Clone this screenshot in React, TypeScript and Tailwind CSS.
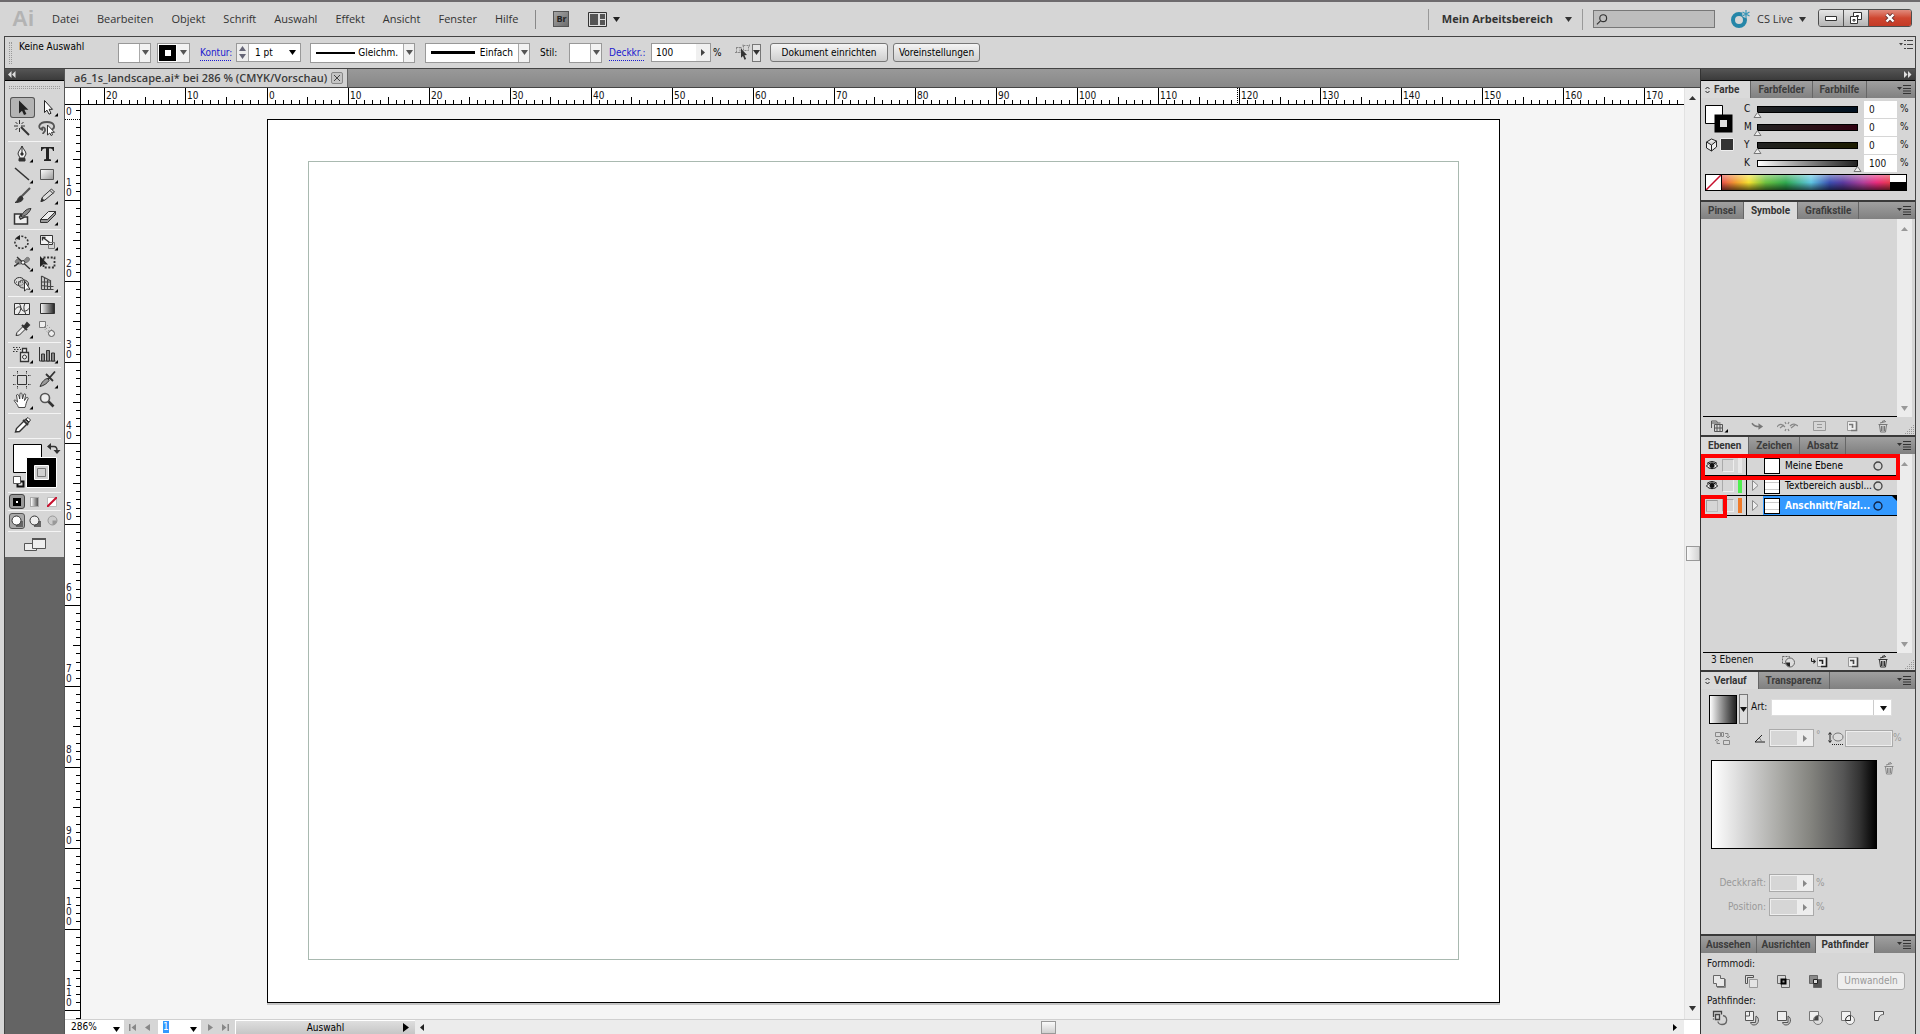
import { ReactNode } from 'react';

const UI = "font-['DejaVu_Sans_Condensed','DejaVu_Sans',sans-serif]";
const MM = 8.105;

const menus = ['Datei', 'Bearbeiten', 'Objekt', 'Schrift', 'Auswahl', 'Effekt', 'Ansicht', 'Fenster', 'Hilfe'];

const Down = ({ className = '' }: { className?: string }) => (
  <svg className={`shrink-0 ${className}`} width="7" height="5" viewBox="0 0 7 5" aria-hidden="true">
    <path d="M0 0h7L3.5 5z" fill="currentColor" />
  </svg>
);

const Right = ({ className = '' }: { className?: string }) => (
  <svg className={`shrink-0 ${className}`} width="5" height="7" viewBox="0 0 5 7" aria-hidden="true">
    <path d="M0 0v7l4-3.5z" fill="currentColor" />
  </svg>
);

/* ---------- menu bar ---------- */

const MenuBar = () => (
  <header className="flex h-9 shrink-0 items-center border-t-2 border-[#6e6b6e] bg-[#d6d6d6] pr-2 pl-3 font-['Open_Sans',sans-serif] text-[11px] text-[#333]">
    <span className="w-[40px] font-['Liberation_Sans',sans-serif] text-[22px] leading-5 font-bold text-[#b3b3b3]">Ai</span>
    <nav className="flex gap-[18px]">
      {menus.map((m) => (
        <button key={m} type="button">{m}</button>
      ))}
    </nav>
    <span className="ml-[17px] h-[19px] w-px bg-[#888]" />
    <button type="button" className="ml-[17px] h-4 w-4 border border-[#555] bg-linear-to-br from-[#a5a5a5] to-[#6d6d6d] text-[9px] leading-3 font-bold text-[#222]">Br</button>
    <button type="button" aria-label="Dokumente anordnen" className="ml-[19px] flex items-center gap-1.5">
      <svg width="19" height="15" viewBox="0 0 19 15">
        <path d="M.5.5h18v14H.5z" fill="#ddd" stroke="#333" />
        <path d="M2 2h8v11H2zM12 2h5v5h-5zM12 8h5v5h-5z" fill="#555" />
      </svg>
      <Down className="text-[#222]" />
    </button>
    <div className="flex-1" />
    <span className="h-[21px] w-px bg-[#999]" />
    <button type="button" className="ml-[13px] flex items-center gap-3 font-bold">
      Mein Arbeitsbereich <Down />
    </button>
    <span className="ml-[10px] h-[21px] w-px bg-[#999]" />
    <label className="ml-[10px] flex h-[18px] w-[122px] items-center border border-[#777] bg-[#bdbdbd] px-0.5">
      <svg width="13" height="13" viewBox="0 0 13 13" fill="none" stroke="#333" strokeWidth="1.3">
        <circle cx="8" cy="5" r="3.8" />
        <path d="M5 8l-4 4" />
      </svg>
      <input type="search" aria-label="Suchen" className="w-full bg-transparent text-[11px] outline-none" />
    </label>
    <button type="button" className="ml-[15px] flex items-center">
      <svg width="20" height="18" viewBox="0 0 20 18" fill="none">
        <circle cx="9" cy="10" r="6" stroke="#2586a8" strokeWidth="4" />
        <path d="M16 0v8M12.500 2l7 4M19.500 2l-7 4" stroke="#d6d6d6" strokeWidth="3" />
        <path d="M16 0v8M12.500 2l7 4M19.500 2l-7 4" stroke="#3a97b8" strokeWidth="1.200" />
      </svg>
      <span className="ml-[7px]">CS Live</span>
      <Down className="ml-1.5" />
    </button>
    <div className="-mt-0.5 ml-3 flex h-[18px] overflow-hidden rounded-[3px] border border-[#4d4d4d]">
      <button type="button" aria-label="Minimieren" className="grid w-[25px] place-items-center border-r border-[#555] bg-linear-to-b from-[#e6e6e6] to-[#b5b5b5]">
        <svg width="12" height="6" viewBox="0 0 12 6"><path d="M.5 1.500h11v4H.5z" fill="#fff" stroke="#333" /></svg>
      </button>
      <button type="button" aria-label="Wiederherstellen" className="grid w-[25px] place-items-center border-r border-[#555] bg-linear-to-b from-[#e6e6e6] to-[#b5b5b5]">
        <svg width="12" height="12" viewBox="0 0 12 12" fill="#fff" stroke="#333">
          <path d="M3.500.5h8v7h-8zM6.500 3.500h2v1h-2z" />
          <path d="M.5 4.500h7v7h-7zM3 7.500h2v1.500H3z" />
        </svg>
      </button>
      <button type="button" aria-label="Schließen" className="grid w-[42px] place-items-center bg-linear-to-b from-[#e08a7c] via-[#cf4630] to-[#c33a26]">
        <svg width="12" height="10" viewBox="0 0 12 10">
          <path d="M2.500 1.500l7 7M9.500 1.500l-7 7" stroke="#633" strokeWidth="4" />
          <path d="M2.500 1.500l7 7M9.500 1.500l-7 7" stroke="#fff" strokeWidth="2.400" />
        </svg>
      </button>
    </div>
  </header>
);

/* ---------- control bar ---------- */

const Combo = ({ children, label, className = '' }: { children?: ReactNode; label: string; className?: string }) => (
  <button type="button" aria-label={label} className={`flex h-[20px] items-stretch border border-[#999] bg-white ${className}`}>
    <span className="flex flex-1 items-center justify-between px-[5px]">{children}</span>
    <span className="grid w-[11px] place-items-center border-l border-[#aaa] bg-[#f2f2f2] text-[#555]"><Down /></span>
  </button>
);

const ControlBar = () => (
  <div className={`flex h-[31px] shrink-0 items-center bg-[#d6d6d6] text-[10px] leading-3 text-black ${UI}`}>
    <span className="ml-1 h-[22px] w-[3px] border-x border-dotted border-[#999]" />
    <span className="mt-1 ml-[7px] w-[99px] self-start">Keine Auswahl</span>
    <Combo label="Fläche" className="w-[33px]" />
    <button type="button" aria-label="Konturfarbe" className="ml-1.5 flex h-[20px] w-[33px] border border-[#999] bg-white">
      <span className="grid flex-1 place-items-center self-stretch border border-white bg-black"><span className="h-[6px] w-[6px] bg-white" /></span>
      <span className="grid w-[12px] place-items-center self-stretch bg-[#f2f2f2] text-[#555]"><Down /></span>
    </button>
    <a href="#kontur" className="ml-[10px] w-[36px] text-[#1a1ad0] underline decoration-dotted underline-offset-4">Kontur:</a>
    <div className="flex h-[19px] w-[65px] items-center border border-[#999] bg-white">
      <span className="grid h-full w-[12px] shrink-0 place-items-center border-r border-[#aaa] bg-[#eee]">
        <svg width="7" height="13" viewBox="0 0 7 13" fill="#667"><path d="M0 5h7L3.500 0zM0 8h7l-3.500 5z" /></svg>
      </span>
      <input aria-label="Konturstärke" defaultValue="1 pt" className="w-full min-w-0 pl-1.5 outline-none" />
      <Down className="mr-1" />
    </div>
    <Combo label="Breitenprofil" className="ml-[9px] w-[105px]">
      <span className="h-[2px] w-[39px] bg-black" />Gleichm.
    </Combo>
    <Combo label="Pinseldefinition" className="ml-[10px] w-[105px]">
      <span className="h-[3px] w-[44px] bg-black" />Einfach
    </Combo>
    <span className="ml-[10px] w-[29px]">Stil:</span>
    <Combo label="Stil" className="w-[33px]" />
    <a href="#deckkraft" className="ml-[7px] w-[42px] text-[#1a1ad0] underline decoration-dotted underline-offset-4">Deckkr.:</a>
    <div className="flex h-[19px] w-[60px] items-center border border-[#999] bg-white">
      <input aria-label="Deckkraft" defaultValue="100" className="w-full min-w-0 pl-1 outline-none" />
      <span className="grid h-full w-[14px] shrink-0 place-items-center bg-[#f0f0f0] text-[#444]"><Right /></span>
    </div>
    <span className="ml-0.5 w-[22px]">%</span>
    <button type="button" aria-label="Ähnliche Objekte auswählen" className="flex items-center gap-0.5">
      <svg width="15" height="17" viewBox="0 0 15 17" fill="none" stroke="#888">
        <path d="M0 8.500h5v-5H0M8.500 1.500h5v5h-5zM1.500 3.500h5v5h-5zM8 .5v3M14.500.5v3" strokeDasharray="2 1" />
        <path d="M6 4.500l6 6.500-2.500.3 1.600 3.800-1.600.7-1.500-3.800-2 1.800z" fill="#333" stroke="none" />
      </svg>
      <span className="grid h-[18px] w-[9px] place-items-center border border-[#777] bg-[#e4e4e4]"><Down className="text-[#333]" /></span>
    </button>
    <button type="button" className="ml-[9px] h-[19px] w-[118px] rounded-[3px] border border-[#777] bg-linear-to-b from-[#f4f4f4] to-[#cfcfcf]">Dokument einrichten</button>
    <button type="button" className="ml-[5px] h-[19px] w-[87px] rounded-[3px] border border-[#777] bg-linear-to-b from-[#f4f4f4] to-[#cfcfcf]">Voreinstellungen</button>
    <div className="flex-1" />
    <button type="button" aria-label="Bedienfeldmenü" className="mt-[3px] mr-0.5 self-start">
      <svg width="14" height="9" viewBox="0 0 14 9" stroke="#444"><path d="M0 3h4L2 5.500z" fill="#444" stroke="none" /><path d="M5 .5h2M8 .5h6M5 4.500h2M8 4.500h6M5 8.500h2M8 8.500h6" /></svg>
    </button>
  </div>
);

/* ---------- tool palette ---------- */

type Tool = { name: string; icon: ReactNode; more?: boolean; active?: boolean };

const groups: Tool[][] = [
  [
    { name: 'Auswahl', active: true, icon: <path d="M9 3.500v13l3-2.800 2 4.300 2.400-1-2-4.300h4z" fill="#222" stroke="none" /> },
    { name: 'Direktauswahl', more: true, icon: <path d="M9.500 3.500v12l2.500-2.300 2 4 2-.9-1.900-4h3.400z" fill="#fff" stroke="#222" /> },
    { name: 'Zauberstab', icon: <><path d="M11 9l8 8" strokeWidth="2" /><path d="M9.500 2v4M9.500 10v4M4 8h4M11 8h4M5.500 4l2 2M13.500 4l-2 2M5.500 12l2-2" strokeWidth="1" /></> },
    { name: 'Lasso', icon: <><path d="M8 12c-6-1-5-8 4-8 8 0 9 6 4 8M8 12c-3-2 1-4 2-1s-2 3-2 5" strokeWidth="1.800" stroke="#555" /><path d="M12.500 7v10l2.300-2 1.200 2.500 1.500-.7-1-2.500h3z" fill="#fff" strokeWidth="1" /></> },
  ],
  [
    { name: 'Zeichenstift', more: true, icon: <><path d="M12 3c-1 3-4 5-4 8l2 4h4l2-4c0-3-3-5-4-8z" fill="#eee" /><path d="M12 3v7" /><circle cx="12" cy="11" r="1.200" fill="#222" /><path d="M9 15.500h6v2.500H9z" fill="#333" /></> },
    { name: 'Text', more: true, icon: <path d="M6 4h13v4h-1c-.5-2-1-2.500-4-2.500V16l2 .5V18H9v-1.500l2-.5V5.500c-3 0-3.500.5-4 2.500H6z" fill="#222" stroke="none" /> },
    { name: 'Liniensegment', more: true, icon: <path d="M5 4l14 12" strokeWidth="1.600" /> },
    { name: 'Rechteck', more: true, icon: <path d="M5.500 5.500h13v10h-13z" fill="url(#shade)" stroke="#555" /> },
    { name: 'Pinsel', icon: <><path d="M20 3l-9 9" strokeWidth="2.200" stroke="#555" /><path d="M11 11l2 2c0 3-3 4.500-8 4.500 3-1 2-5 6-6.500z" fill="#333" /></> },
    { name: 'Buntstift', more: true, icon: <><path d="M6 16.500l1.500-4.500 9-8 3 3-9.500 8z" fill="#ddd" /><path d="M6 16.500l1-3 2 2zM15 5.500l3 3" fill="#222" /></> },
    { name: 'Tropfenpinsel', icon: <><path d="M4.500 8h7l-2 3 1 2 4-2h3v7h-13z" fill="#eee" strokeWidth="1.500" /><path d="M21 2.500c-5 0-8 4-10 8 4 0 8-3 10-8z" fill="#888" /></> },
    { name: 'Radiergummi', more: true, icon: <><path d="M5.500 13.500l8-8h7l-8 8z" fill="#eee" /><path d="M5.500 13.500v3h7l8-8v-3l-8 8z" fill="#999" /></> },
  ],
  [
    { name: 'Drehen', more: true, icon: <><path d="M8 6.500c4-3 10 0 10 5s-7 8-11 4-1-7-1-7" strokeWidth="1.600" strokeDasharray="2 1.500" /><path d="M5 7.500l5-3.500v5z" fill="#222" stroke="none" /></> },
    { name: 'Skalieren', more: true, icon: <><path d="M5.500 4.500h12v9h-12z" fill="#f4f4f4" /><path d="M13.500 11.500h6v6h-6z" stroke="#777" /><path d="M8 6.500l6.500 5M7.500 9.500v-3h3" strokeWidth="1.400" /></> },
    { name: 'Verkrümmen', more: true, icon: <><path d="M5 10c3-7 5 1 8-1s3-5 6-3c2 3-3 5-5 5s-5 3-9-1z" fill="#888" stroke="#777" /><path d="M7 5l13 12M4 14c3 0 3-3 5-3" strokeWidth="1.300" /><circle cx="13" cy="10.500" r="1.800" fill="#fff" /></> },
    { name: 'Frei transformieren', icon: <><path d="M5 4v11l3-2.500h5z" fill="#222" stroke="none" /><path d="M8.500 5.500h11v10h-11z" strokeWidth="1.800" strokeDasharray="2 1.600" /></> },
    { name: 'Formerstellung', more: true, icon: <><ellipse cx="9.500" cy="8.500" rx="5" ry="4" fill="#ddd" /><ellipse cx="13.500" cy="11" rx="5" ry="4" fill="#bbb" fillOpacity=".6" /><path d="M6 9h7" strokeDasharray="1 1" /><path d="M14.500 8v10l2.300-2 3.200.3z" fill="#fff" /></> },
    { name: 'Perspektivenraster', more: true, icon: <path d="M6.500 3v13.500M9.500 4.500v12M12.500 5.500v11M6.500 3L16 8M6.500 9h9M6.500 12.500l12 1M6.500 16.500h12M15.500 8v8.500" strokeWidth="1.200" stroke="#444" /> },
  ],
  [
    { name: 'Gitter', icon: <><path d="M4.500 5.500h15v11h-15z" fill="#eee" /><path d="M4.500 12c3-4 6-4 7-1s5 3 8-1M9 5.500c3 3 2 7-1 11M15 5.500c-2 4-1 7 1 11" /></> },
    { name: 'Verlauf', icon: <path d="M5.500 5.500h14v10h-14z" fill="url(#ramp)" /> },
    { name: 'Pipette', more: true, icon: <><path d="M6 16.500l1-3 6-6 2.500 2.500-6 6z" fill="#eee" /><path d="M12 6l5 5M14 8l3-4 2 2-3.500 3.500z" strokeWidth="2" fill="#222" /></> },
    { name: 'Angleichen', icon: <><path d="M4.500 2.500h6v6h-6z" fill="#eee" stroke="#777" /><path d="M10 4l8 8M8 8l6 7M9 7l6 6" stroke="#888" strokeDasharray="1 2" /><circle cx="16.500" cy="14.500" r="3" fill="#eee" stroke="#555" /></> },
  ],
  [
    { name: 'Symbol-aufsprühen', more: true, icon: <><path d="M10.500 8.500h8v9h-8zM12.500 4.500h4v4h-4z" fill="#eee" strokeWidth="1.300" /><circle cx="14.500" cy="13" r="2" /><path d="M3 3.500h7M4 5.500h7M3 7.500h5" strokeDasharray="1.500 1.500" /></> },
    { name: 'Säulendiagramm', more: true, icon: <><path d="M4.500 3v14h16" /><path d="M6.500 10h3v7h-3zM11.500 6.500h3V17h-3zM16.500 9h3v8h-3z" fill="#888" strokeWidth="1" /></> },
  ],
  [
    { name: 'Zeichenfläche', icon: <><path d="M7.500 6.500h9v9h-9z" /><path d="M7.500 2v3M16.500 2v3M7.500 17v3M16.500 17v3M3 6.500h3M3 15.500h3M18 6.500h3M18 15.500h3" strokeDasharray="1.500 1" /></> },
    { name: 'Slice', more: true, icon: <><path d="M5 17.500c2-5 5-8 8-8l1 2c-2 3-5 5-9 6z" fill="#999" /><path d="M13 10.500l7-8M11 5l7 7" strokeWidth="1.800" /></> },
    { name: 'Hand', more: true, icon: <path d="M8.500 17.500c-1-3-3-5-4.500-7 1-1 2 0 3.500 1.500l-1-7c1-1 2-.5 2.500 1l.7 3 .3-5.500c1-.8 2-.3 2 .5l.5 5 1.500-5c1-.5 2 0 1.500 1.500l-1 5 2-3c1-.5 2 .3 1.500 1.500-2 3-2 6-3 8.500z" fill="#fff" strokeWidth=".9" /> },
    { name: 'Zoom', icon: <><circle cx="10" cy="8" r="4.500" fill="#eee" stroke="#555" strokeWidth="1.600" /><path d="M13.500 11.500l5 5" strokeWidth="2.600" /></> },
  ],
  [{ name: 'Farbpipette', icon: <><path d="M5.500 17l1-3.500 9-9 3 3-9 9z" fill="#fff" strokeWidth="1.400" /><path d="M13 5l5 5" strokeWidth="1.800" /><path d="M16 4l2-1.500 2.500 2.500-1.500 2z" fill="#fff" /></> }],
];

const Toolbox = () => (
  <aside className="flex w-[60px] shrink-0 flex-col border-r border-[#555] bg-[#646464]">
    <button type="button" aria-label="Werkzeuge einklappen" className="h-[11px] bg-linear-to-b from-[#555] to-[#3b3b3b] pl-[3px]">
      <svg width="8" height="7" viewBox="0 0 8 7" fill="#ddd"><path d="M3.500 0v7L0 3.500zM7.500 0v7L4 3.500z" /></svg>
    </button>
    <div className="border-t border-black bg-[#d6d6d6]">
      <div className="mx-1 mt-[5px] mb-[7px] h-[3px] border-y border-dotted border-[#999]" />
      {groups.map((group, g) => (
        <div key={g} className="mx-[3px] grid grid-cols-[25px_25px] border-b border-[#f4f4f4] pt-px pb-0.5 pl-0.5">
          {group.map((t) => (
            <button
              key={t.name}
              type="button"
              title={t.name}
              className={`h-[21px] w-[25px] rounded-[3px] ${t.active ? 'bg-[#b4b4b4] inset-ring inset-ring-[#555]' : ''}`}
            >
              <svg width="25" height="21" viewBox="0 0 25 21" fill="none" stroke="#333">
                {t.icon}
                {t.more && <path d="M23 16v3.500h-3.500z" fill="#000" stroke="none" />}
              </svg>
            </button>
          ))}
        </div>
      ))}
      <svg className="block" width="59" height="53" viewBox="0 0 59 53">
        <path d="M8.500 5.500h28v28h-28z" fill="#fff" stroke="#000" />
        <path d="M21.500 18.500h30v30h-30z" fill="#000" stroke="#fff" />
        <path d="M29.500 26.500h14v14h-14z" fill="#d0d0d0" stroke="#fff" />
        <path d="M32.500 29.500h8v8h-8z" fill="none" stroke="#777" />
        <path d="M45 7.500h4c2 0 3 1 3 4" fill="none" stroke="#333" strokeWidth="1.500" />
        <path d="M46 4v7l-4-3.500zM48.500 11h7L52 15z" fill="#333" />
        <path d="M14.500 42.500h4v5h-6v-3" fill="none" stroke="#111" strokeWidth="2" />
        <path d="M8.500 37.500h7v7h-7z" fill="#fff" stroke="#555" />
      </svg>
      <div className="mx-[3px] flex h-[19px] items-center gap-[3px] border-y border-[#f4f4f4] pl-px">
        <button type="button" aria-label="Farbe" className="grid h-[15px] w-4 place-items-center rounded-[3px] border border-[#444] bg-[#999]">
          <span className="h-[8px] w-[8px] border-[3px] border-black bg-white" />
        </button>
        <button type="button" aria-label="Verlauf" className="ml-0.5 h-[10px] w-[9px] border border-[#aaa] bg-linear-to-r from-white to-[#555]" />
        <button type="button" aria-label="Ohne" className="ml-[5px]">
          <svg width="10" height="10" viewBox="0 0 10 10"><path d="M.5.5h9v9h-9z" fill="#fff" stroke="#bbb" /><path d="M0 10L10 0" stroke="#c8102e" strokeWidth="2" /></svg>
        </button>
      </div>
      <div className="mx-[3px] flex h-[21px] items-center gap-0.5 border-b border-[#f4f4f4] pl-px">
        {['#fff', '#eee', '#ccc'].map((c, i) => (
          <button key={c} type="button" aria-label={`Zeichenmodus ${i + 1}`} className={`grid h-4 w-4 place-items-center rounded-[3px] ${i === 0 ? 'border border-[#555] bg-[#aaa]' : ''}`}>
            <svg width="13" height="13" viewBox="0 0 13 13">
              {i < 2 && <path d="M5 6h7v6H5z" fill="#666" />}
              <circle cx="5.500" cy="5.500" r="4.500" fill={c} stroke={i === 2 ? '#999' : '#333'} />
              {i === 2 && <path d="M5.500 5.500H10a4.500 4.500 0 0 1-4.500 4.500z" fill="#999" />}
            </svg>
          </button>
        ))}
      </div>
      <button type="button" aria-label="Bildschirmmodus" className="mx-auto grid h-[25px] place-items-center">
        <svg width="22" height="16" viewBox="0 0 22 16" stroke="#555">
          <path d="M.5 6.500h12v7H.5z" fill="#eee" />
          <path d="M8.500 1.500h13v10h-13z" fill="#eee" />
          <path d="M8 2h14" strokeWidth="2" />
        </svg>
      </button>
    </div>
    <svg width="0" height="0">
      <defs>
        <linearGradient id="shade" x2="1" y2="1"><stop stopColor="#fff" /><stop offset="1" stopColor="#999" /></linearGradient>
        <linearGradient id="ramp"><stop stopColor="#fff" /><stop offset="1" stopColor="#222" /></linearGradient>
      </defs>
    </svg>
  </aside>
);

/* ---------- document window ---------- */

const tickLen = (i: number) => (i % 10 === 0 ? 17 : i % 5 === 0 ? 7 : 4);

const HRuler = () => (
  <svg className={`h-4 min-w-0 flex-1 text-[10px] ${UI}`} fill="#111">
    {Array.from({ length: 198 }, (_, k) => k - 22).map((i) => {
      const x = Math.floor(186 + i * MM);
      return (
        <g key={i}>
          <path d={`M${x + 0.5} 16v-${tickLen(i)}`} stroke="#000" />
          {i % 10 === 0 && <text x={x + 2} y="11">{Math.abs(i)}</text>}
        </g>
      );
    })}
    <path d="M1156.500 0v16" stroke="#000" strokeDasharray="1 1" />
  </svg>
);

const VRuler = () => (
  <svg className={`h-full w-[15px] text-[10px] ${UI}`} fill="#223">
    {Array.from({ length: 114 }, (_, k) => k - 1).map((i) => {
      const y = Math.floor(14 + i * MM);
      const digits = String(i).split('');
      return (
        <g key={i}>
          <path d={`M15 ${y + 0.5}h-${tickLen(i)}`} stroke="#000" strokeDasharray={i === 0 ? '1 1' : undefined} />
          {i % 10 === 0 && digits.map((d, n) => (
            <text key={n} x="1" y={y - 4 - (digits.length - 1 - n) * 10}>{d}</text>
          ))}
        </g>
      );
    })}
  </svg>
);

const StatusBar = () => (
  <div className={`flex h-[15px] shrink-0 border-t border-[#d0d0d0] bg-[#d6d6d6] text-[10px] leading-3 text-black ${UI}`}>
    <label className="flex w-[59px] items-center bg-white pr-1 pl-1.5">
      <input aria-label="Zoomstufe" defaultValue="286%" className="w-full min-w-0 outline-none" />
      <Down className="mt-1" />
    </label>
    <span className="flex w-[34px] items-center justify-around pr-1 text-[#888]">
      <button type="button" aria-label="Erste Zeichenfläche"><svg width="7" height="7" fill="currentColor"><path d="M0 0h1.500v7H0zM7 0v7L2.500 3.500z" /></svg></button>
      <button type="button" aria-label="Vorherige"><svg width="5" height="7" fill="currentColor"><path d="M5 0v7L0 3.500z" /></svg></button>
    </span>
    <label className="flex w-[43px] items-center bg-white pr-1 pl-[5px]">
      <input aria-label="Zeichenfläche" defaultValue="1" className="w-[6px] min-w-0 bg-[#3399ff] text-white outline-none" />
      <Down className="mt-1 ml-auto" />
    </label>
    <span className="flex w-[34px] items-center justify-around px-0.5 text-[#888]">
      <button type="button" aria-label="Nächste"><svg width="5" height="7" fill="currentColor"><path d="M0 0v7l5-3.500z" /></svg></button>
      <button type="button" aria-label="Letzte Zeichenfläche"><svg width="7" height="7" fill="currentColor"><path d="M5.500 0H7v7H5.500zM0 0v7l4.500-3.500z" /></svg></button>
    </span>
    <button type="button" className="flex w-[180px] items-center border-t border-l border-white bg-linear-to-b from-[#dedede] to-[#c6c6c6] pr-1.5 pl-3">
      <span className="flex-1">Auswahl</span>
      <svg width="6" height="9"><path d="M0 0v9l6-4.500z" /></svg>
    </button>
    <div className="flex flex-1 items-center justify-between bg-[#ececec] pr-1.5 pl-[5px]">
      <svg width="4" height="7"><path d="M4 0v7L0 3.500z" fill="#222" /></svg>
      <span className="h-[13px] w-[15px] border border-[#999] bg-linear-to-b from-[#fafafa] to-[#d0d0d0]" />
      <Right />
    </div>
    <span className="w-4 bg-white" />
  </div>
);

const DocumentWindow = () => (
  <main className="flex min-w-0 flex-1 flex-col">
    <div className="flex h-[19px] shrink-0 border-b border-[#444] bg-linear-to-b from-[#999] to-[#888]">
      <div className="flex items-center gap-1 border-r border-[#666] bg-[#d2d2d2] pr-1 pl-[9px] font-['Open_Sans',sans-serif] text-[11px] leading-4 font-semibold text-[#3a3a3a]">
        a6_1s_landscape.ai* bei 286 % (CMYK/Vorschau)
        <button type="button" aria-label="Dokument schließen" className="grid h-[12px] w-[12px] place-items-center rounded-[2px] border border-[#888] bg-[#c4c4c4]">
          <svg width="6" height="6" viewBox="0 0 6 6" stroke="#444"><path d="M0 0l6 6M6 0L0 6" /></svg>
        </button>
      </div>
    </div>
    <div className="flex min-h-0 flex-1">
      <div className="flex min-w-0 flex-1 flex-col">
        <div className="flex h-[17px] shrink-0 border-b border-black bg-white">
          <span className="w-4 border-r border-black" />
          <HRuler />
        </div>
        <div className="flex min-h-0 flex-1">
          <div className="w-4 shrink-0 border-r border-black bg-white"><VRuler /></div>
          <div className="flex min-w-0 flex-1 overflow-hidden bg-[#f5f5f5] pt-[14px] pr-[184px] pb-4 pl-[186px]">
            <div className="flex-1 border border-black bg-white px-[40px] pt-[41px] pb-[42px] shadow-[0_2px_0_#c4c4c4]">
              <div className="h-full border border-[#a9b9b0]" />
            </div>
          </div>
        </div>
      </div>
      <div className="flex w-4 shrink-0 flex-col items-center justify-between border-l border-[#e2e2e2] bg-[#efefef] pt-2 pb-2">
        <svg width="7" height="4"><path d="M0 4h7L3.500 0z" fill="#333" /></svg>
        <span className="h-[15px] w-[14px] border border-[#999] bg-linear-to-r from-[#fafafa] to-[#d4d4d4]" />
        <Down className="text-[#333]" />
      </div>
    </div>
    <StatusBar />
  </main>
);

/* ---------- panels ---------- */

type PanelTabsProps = { tabs: string[]; active: string; collapsible?: boolean; tight?: boolean };

const PanelTabs = ({ tabs, active, collapsible, tight }: PanelTabsProps) => (
  <div className="flex h-[17px] bg-linear-to-b from-[#a0a0a0] to-[#808080] font-[Roboto,sans-serif] text-[10px] leading-4 font-bold">
    {tabs.map((t) => (
      <button
        key={t}
        type="button"
        className={`flex items-center gap-1 border-r border-[#666] ${t === active ? 'bg-[#dadada] text-[#333]' : 'text-[#3c3c3c]'} ${t === active && collapsible ? 'pr-[11px] pl-1' : tight ? 'px-[5px]' : 'px-[7px]'}`}
      >
        {t === active && collapsible && (
          <svg width="5" height="8" viewBox="0 0 5 8" fill="none" stroke="#222"><path d="M.5 3l2-2 2 2M.5 5l2 2 2-2" /></svg>
        )}
        {t}
      </button>
    ))}
    <button type="button" aria-label="Bedienfeldmenü" className="mr-1 ml-auto">
      <svg width="14" height="9" viewBox="0 0 14 9" stroke="#333"><path d="M0 2h5L2.500 5z" fill="#333" stroke="none" /><path d="M6 .5h8M6 3.500h8M6 6h8M6 8.500h8" /></svg>
    </button>
  </div>
);

const PanelScroll = () => (
  <div className="mr-[3px] flex w-[15px] shrink-0 flex-col items-center justify-between bg-[#ececec] pt-2 pb-1.5">
    <svg width="7" height="4"><path d="M0 4h7L3.500 0z" fill="#999" /></svg>
    <Down className="text-[#999]" />
  </div>
);

const Grip = () => (
  <svg className="ml-auto self-end" width="10" height="10" fill="#999"><path d="M8 0h1v1H8zM6 2h1v1H6zM8 2h1v1H8zM4 4h1v1H4zM6 4h1v1H6zM8 4h1v1H8zM2 6h1v1H2zM4 6h1v1H4zM6 6h1v1H6zM8 6h1v1H8zM0 8h1v1H0zM2 8h1v1H2zM4 8h1v1H4zM6 8h1v1H6zM8 8h1v1H8z" /></svg>
);

const NewIcon = ({ color = '#444' }: { color?: string }) => (
  <svg width="12" height="12" viewBox="0 0 12 12" fill="none" stroke={color}><path d="M1.500 1.500h9v9h-9z" fill="#eee" stroke="#999" /><path d="M3 4.500h3.500v3.500M5 10.500h5.500v-9" strokeWidth="1.600" /></svg>
);

const Trash = ({ color = '#333' }: { color?: string }) => (
  <svg width="12" height="13" viewBox="0 0 12 13" fill="none" stroke={color}><path d="M1.500 4.500h9M3 3l6-1.500M2.500 5l1 7h5l1-7M4.500 6v5M6 6v5M7.500 6v5M5 1.500l3-1" /></svg>
);

const inks = [
  { name: 'C', value: '0', bar: 'from-[#222] to-[#001020]' },
  { name: 'M', value: '0', bar: 'from-[#222] to-[#300010]' },
  { name: 'Y', value: '0', bar: 'from-[#222] to-[#1c1c00]' },
  { name: 'K', value: '100', bar: 'from-white to-[#222]' },
];

const ColorPanel = () => (
  <section>
    <PanelTabs tabs={['Farbe', 'Farbfelder', 'Farbhilfe']} active="Farbe" collapsible />
    <div className="h-[102px] bg-[#d6d6d6] pt-0.5 pr-0.5 pl-1">
      <div className="flex">
        <svg className="mt-1 shrink-0" width="30" height="48" viewBox="0 0 30 48">
          <path d="M.5 1.500h17v18H.5z" fill="#fff" stroke="#000" />
          <path d="M9.500 10.500h18v18h-18z" fill="#000" />
          <path d="M15 16h7v7h-7z" fill="#ddd" />
          <path d="M1.500 38l5-3 5 2v6l-5 4-5-3zM1.500 38l5 3 5-4M6.500 41v6" fill="#eee" stroke="#222" />
          <path d="M15.500 34.500h13v12h-13z" fill="#333" stroke="#eee" />
        </svg>
        <div className="flex-1">
          {inks.map((ink) => (
            <div key={ink.name} className="flex h-[18px] items-center">
              <label htmlFor={`ink-${ink.name}`} className="w-[22px] pl-[9px]">{ink.name}</label>
              <div className="relative h-[7px] flex-1">
                <div className={`h-[7px] border border-black bg-linear-to-r ${ink.bar}`} />
                <svg className={`absolute top-[6px] ${ink.name === 'K' ? '-right-1' : '-left-1'}`} width="9" height="6" viewBox="0 0 9 6"><path d="M1 5.500h7L4.500.5z" fill="#eee" stroke="#777" /></svg>
              </div>
              <input id={`ink-${ink.name}`} defaultValue={ink.value} className="ml-1.5 h-[17px] w-[33px] bg-white pl-[5px] outline-none" />
              <span className="w-[16px] pl-[3px]">%</span>
            </div>
          ))}
        </div>
      </div>
      <div className="mt-0.5 mr-1.5 flex h-[17px] border border-black">
        <svg width="16" height="15" viewBox="0 0 16 15"><path d="M0 0h16v15H0z" fill="#fff" /><path d="M0 15L15 0" stroke="#c8102e" strokeWidth="1.500" /><path d="M15.500 0v15" stroke="#000" /></svg>
        <div className="flex-1 bg-[linear-gradient(to_right,#e8524a,#f09a30_8%,#f4e030_16%,#6cc040_26%,#2fa84f_38%,#5ec4e0_53%,#3b4fb0_64%,#5a3a9e_72%,#b0409a_84%,#e82c7c_92%,#e83a4c)]">
          <div className="h-full bg-linear-to-b from-white/40 via-transparent to-black/60" />
        </div>
        <div className="w-4 bg-linear-to-b from-white from-50% to-black to-50%" />
      </div>
    </div>
  </section>
);

const SymbolsPanel = () => (
  <section className="border-t-2 border-[#3a3a3a]">
    <PanelTabs tabs={['Pinsel', 'Symbole', 'Grafikstile']} active="Symbole" />
    <div className="flex h-[198px]">
      <div className="ml-0.5 flex-1 border-b border-black" />
      <PanelScroll />
    </div>
    <div className="flex h-[18px] items-center pl-2.5 text-[#777]">
      <svg className="mr-[22px]" width="18" height="13" viewBox="0 0 18 13" fill="none" stroke="#555"><path d="M.5 3v-2h5l1 1.500M.5 3h9M.5 3v5M3.500 4.500h8v7h-8zM6 5v6M9 5v6M4 8h7" /><path d="M17 9v3.500h-3.500z" fill="#000" stroke="none" /></svg>
      <svg className="mr-[13px]" width="13" height="9" viewBox="0 0 14 9" fill="none" stroke="#777" strokeWidth="1.500"><path d="M1 1c2 3 5 4 9 3.500" /><path d="M8 1l5 3.500L8 8z" fill="#777" stroke="none" /></svg>
      <svg className="mr-[15px]" width="21" height="11" viewBox="0 0 21 11" fill="none" stroke="#888" strokeWidth="1.200"><path d="M0 6c3-4 5-3 8 0M13 5c3-3 5-2 8 0M3 7l4-3M14 7l4-3M8 1l1 2M12 1l-1 2M8 10l1-2M12 10l-1-2" /></svg>
      <svg className="mr-5" width="13" height="10" viewBox="0 0 13 10" fill="none" stroke="#999"><path d="M.5.5h12v9H.5zM4 3.500h5M4 6.500h5" /></svg>
      <span className="mr-[19px]"><NewIcon color="#777" /></span>
      <Trash color="#777" />
      <Grip />
    </div>
  </section>
);

const layers = [
  { name: 'Meine Ebene', color: 'bg-[#e8e8e8]', visible: true },
  { name: 'Textbereich ausbl...', color: 'bg-[#4ff04f]', visible: true, nested: true },
  { name: 'Anschnitt/Falzl...', color: 'bg-[#f07a28]', visible: false, nested: true, selected: true },
];

const LayersPanel = () => (
  <section className="border-t-2 border-[#3a3a3a]">
    <PanelTabs tabs={['Ebenen', 'Zeichen', 'Absatz']} active="Ebenen" />
    <div className="relative flex h-[199px]">
      <ul className="ml-0.5 flex-1 border-b border-black pt-0.5">
        {layers.map((l) => (
          <li key={l.name} className="flex h-5 items-stretch border-b border-black">
            <button type="button" aria-label={`${l.name} ein-/ausblenden`} className="grid w-[18px] place-items-center">
              {l.visible ? (
                <svg width="12" height="9" viewBox="0 0 12 9"><path d="M.5 5C3 1 9 1 11.500 5 9 8.500 3 8.500.5 5z" fill="#eee" stroke="#111" /><circle cx="6" cy="4.500" r="2.500" fill="#111" /><path d="M1 2.500C4 0 8 0 11 2.500" fill="none" stroke="#111" /></svg>
              ) : (
                <span className="h-3 w-3 border border-[#bbb] border-t-[#999] border-l-[#999]" />
              )}
            </button>
            <span className="mt-[3px] ml-px h-[13px] w-3 border border-[#eee] border-t-[#aaa] border-l-[#aaa]" />
            <span className={`my-0.5 ml-1 w-1 ${l.color}`} />
            <span className="ml-1 w-px bg-black" />
            <span className="grid w-[16px] place-items-center">
              {l.nested && <svg width="7" height="11" viewBox="0 0 7 11"><path d="M.5.5v10l5.500-5z" fill="#eee" stroke="#888" /></svg>}
            </span>
            <span className={`flex flex-1 items-center pl-px ${l.selected ? 'bg-[#3399ff] font-bold text-white' : 'text-black'}`}>
              <span className="mr-[5px] h-4 w-4 border border-black bg-white py-[3px]">
                {l.nested && <span className="block h-full border-y border-[#ccc]" />}
              </span>
              <span className="w-[88px] whitespace-nowrap">{l.name}</span>
              <svg width="10" height="10" viewBox="0 0 10 10"><circle cx="5" cy="5" r="4" fill="none" stroke={l.selected ? '#124' : '#444'} strokeWidth="1.300" /></svg>
            </span>
          </li>
        ))}
      </ul>
      <PanelScroll />
      <span className="absolute top-0 left-0 h-[26px] w-[199px] border-4 border-[#f00]" />
      <span className="absolute top-[41px] left-0 h-[23px] w-[26px] border-4 border-[#f00]" />
      <svg className="absolute top-[42px] left-[191px]" width="5" height="5"><path d="M0 0h5v5z" /></svg>
    </div>
    <div className="flex h-[17px] items-center pl-2.5">
      <span className="mb-[3px] w-[71px] whitespace-nowrap">3 Ebenen</span>
      <svg className="mr-4" width="13" height="12" viewBox="0 0 13 12" fill="none" stroke="#666"><path d="M.5.5h7v7h-7z" strokeDasharray="2 1" /><circle cx="8" cy="6.500" r="4.500" fill="#ddd" /><path d="M8 2v4.500H4c0 4 4 4 4 4z" fill="#222" stroke="none" /></svg>
      <span className="mr-[19px] flex items-center"><svg width="5" height="7" viewBox="0 0 5 7"><path d="M.5 0v3.500H3" fill="none" stroke="#222" /><path d="M2.500 1v5L5 3.500z" fill="#222" /></svg><NewIcon color="#222" /></span>
      <span className="mr-[18px]"><NewIcon /></span>
      <Trash />
      <Grip />
    </div>
  </section>
);

const StepField = ({ label }: { label: string }) => (
  <span className="flex h-[18px] w-[45px] border border-[#aaa]">
    <input aria-label={label} disabled className="w-[28px] border border-[#eee] bg-[#d6d6d6]" />
    <span className="grid flex-1 place-items-center bg-[#ededed] text-[#888]"><Right /></span>
  </span>
);

const GradientPanel = () => (
  <section className="border-t-2 border-[#3a3a3a]">
    <PanelTabs tabs={['Verlauf', 'Transparenz']} active="Verlauf" collapsible />
    <div className="h-[245px] pt-[5px]">
      <div className="flex items-center pl-2">
        <button type="button" aria-label="Verlaufsfeld" className="h-[29px] w-[28px] border border-black bg-linear-to-r from-white to-[#222]" />
        <button type="button" aria-label="Verlauf wählen" className="ml-0.5 grid h-[30px] w-[9px] place-items-center border border-[#777] bg-[#ddd]"><Down /></button>
        <label htmlFor="art" className="mb-1 w-[23px] pl-[3px]">Art:</label>
        <div className="relative mb-[3px]">
          <select id="art" className="block h-[17px] w-[121px] appearance-none border border-[#ddd] bg-white"><option /></select>
          <Down className="pointer-events-none absolute top-[7px] right-[5px]" />
          <span className="pointer-events-none absolute inset-y-px right-[18px] w-px bg-[#ccc]" />
        </div>
      </div>
      <div className="mt-[5px] flex items-center pl-[14px] text-[#999]">
        <svg width="16" height="15" viewBox="0 0 16 15" fill="none" stroke="#888"><path d="M.5 1.500h5v4h-5zM6.500 1.500h2v4h-2zM10 2.500h3v3M11 5l2 2 2-2M8.500 9.500h6v4h-6zM5 12.500H2v-3M0 10l2-2 2 2" /></svg>
        <svg className="ml-[23px]" width="11" height="10" viewBox="0 0 11 10" fill="none" stroke="#222"><path d="M8 2l-7 7h10" /><path d="M5.500 5l2.500 4" stroke="#777" /></svg>
        <span className="ml-1"><StepField label="Winkel" /></span>
        <span className="w-[14px] self-start pl-0.5">°</span>
        <svg width="16" height="15" viewBox="0 0 16 15" fill="none" stroke="#222"><path d="M2 2v9M.5 3.500L2 1.500l1.500 2M.5 9.500L2 11.500l1.500-2" /><ellipse cx="10" cy="6" rx="5" ry="4" fill="#ddd" stroke="#777" /><path d="M4 13.500h12" strokeDasharray="1 1" /></svg>
        <input aria-label="Seitenverhältnis" disabled className="ml-px h-[17px] w-[48px] border border-[#aaa] bg-[#d6d6d6] inset-ring inset-ring-[#eee]" />
        <span>%</span>
      </div>
      <div className="mt-[13px] flex items-start pl-2.5">
        <div className="h-[89px] w-[166px] border border-black bg-[linear-gradient(to_right,#fff,#d4d4d4_20%,#a8a8a4_42%,#84847f_60%,#555_80%,#333_90%,#000)]" />
        <button type="button" aria-label="Verlaufsregler löschen" className="mt-0.5 ml-1.5"><Trash color="#888" /></button>
      </div>
      {['Deckkraft', 'Position'].map((l, i) => (
        <div key={l} className={`flex items-center text-[#999] ${i === 0 ? 'mt-[25px]' : 'mt-1.5'}`}>
          <span className="w-[65px] text-right">{l}:</span>
          <span className="mr-0.5 ml-[3px]"><StepField label={l} /></span>%
        </div>
      ))}
    </div>
  </section>
);

const sq = (a: string, b: string, extra?: ReactNode) => (
  <svg width="16" height="15" viewBox="0 0 16 15" stroke="#666">
    <path d="M1.500 1.500h8v8h-8z" fill={a} />
    <path d="M5.500 5.500h8v8h-8z" fill={b} />
    {extra}
  </svg>
);

const shapeModes: [string, ReactNode][] = [
  ['Vereinen', <svg width="16" height="15" viewBox="0 0 16 15"><path d="M1.500 1.500h7v3h4v8h-8v-3h-3z" fill="#e8e8e8" stroke="#666" /><path d="M5 13.500h8.500V5" fill="none" stroke="#888" /></svg>],
  ['Vorderes abziehen', <svg width="16" height="15" viewBox="0 0 16 15" fill="none"><path d="M5.500 5.500h8v8h-8z" fill="#e4e4e4" stroke="#999" /><path d="M1.500 1.500h8v2h-6v6h-2z" fill="#ddd" stroke="#555" /></svg>],
  ['Schnittmenge', sq('none', 'none', <path d="M5.500 5.500h4v4h-4z" fill="#999" stroke="#000" strokeWidth="2" />)],
  ['Differenz', sq('#888', '#555', <path d="M5.500 5.500h4v4h-4z" fill="#ddd" stroke="#222" />)],
];

const finders: [string, ReactNode][] = [
  ['Fläche aufteilen', <svg width="17" height="16" viewBox="0 0 17 16" fill="none" stroke="#444"><path d="M1.500 7v-5.500h8v3M3.500 9.500h4v-5h-4zM1.500 9.500v-1" strokeWidth="1.300" /><path d="M11 5.500c5 1 5 9-1 9-3 0-4-2-4-3" stroke="#666" strokeWidth="1.300" /></svg>],
  ['Überlappungsbereich entfernen', <svg width="17" height="16" viewBox="0 0 17 16" stroke="#555"><path d="M1.500 1.500h8v9h-8z" fill="#eee" /><path d="M12 6c4 2 3 9-2 9-2 0-3-1-3.500-2.500h5z" fill="#ccc" /><path d="M1.500 6h4v-4.500" fill="none" /></svg>],
  ['Verdeckte Fläche entfernen', <svg width="17" height="16" viewBox="0 0 17 16" stroke="#555"><path d="M1.500 1.500h9v9h-9z" fill="#eee" /><path d="M12 6c4 2 3 9-2 9-2 0-3-1-3.500-2.500h5.500z" fill="#ccc" /></svg>],
  ['Schnittmengenfläche', <svg width="17" height="16" viewBox="0 0 17 16" stroke="#777"><path d="M1.500 1.500h9v9h-9z" fill="#eee" /><circle cx="10" cy="10" r="4.500" fill="#ddd" /><path d="M6 10.500c0-3 2-5 4.500-5v5z" fill="#444" stroke="none" /></svg>],
  ['Kontur aufteilen', <svg width="17" height="16" viewBox="0 0 17 16" fill="#f2f2f2" stroke="#333"><path d="M1.500 1.500h9v9h-9z" stroke="#777" /><circle cx="10" cy="10" r="4.500" stroke="#777" /><path d="M5.500 10.500c0-3 2-5 5-5v5z" /></svg>],
  ['Hinteres Objekt abziehen', <svg width="17" height="16" viewBox="0 0 17 16" fill="#eee" stroke="#555"><path d="M2.500 10.500v-9h9v3c-3 0-5 2-5 6z" /></svg>],
];

const PathfinderPanel = () => (
  <section className="border-t-2 border-[#3a3a3a]">
    <PanelTabs tabs={['Aussehen', 'Ausrichten', 'Pathfinder']} active="Pathfinder" tight />
    <div className="pt-[5px] pl-1.5">
      <p>Formmodi:</p>
      <div className="mt-0.5 flex h-[18px] items-center gap-4 pl-[5px]">
        {shapeModes.map(([name, icon]) => <button key={name} type="button" aria-label={name}>{icon}</button>)}
        <button type="button" disabled className="-ml-[3px] h-[18px] w-[68px] rounded-[3px] border border-[#aaa] bg-[#eee] text-[#999]">Umwandeln</button>
      </div>
      <p className="mt-[5px]">Pathfinder:</p>
      <div className="mt-[3px] flex gap-[15px] pl-[5px]">
        {finders.map(([name, icon]) => <button key={name} type="button" aria-label={name}>{icon}</button>)}
      </div>
    </div>
  </section>
);

const Panels = () => (
  <aside className={`flex w-[215px] shrink-0 flex-col overflow-hidden border-l border-[#333] bg-[#d6d6d6] text-[10px] leading-3 text-[#111] ${UI}`}>
    <button type="button" aria-label="Bedienfelder einklappen" className="flex h-3 shrink-0 items-center justify-end border-b border-black bg-linear-to-b from-[#555] to-[#3b3b3b] pr-[3px]">
      <svg width="8" height="7" viewBox="0 0 8 7" fill="#ddd"><path d="M0 0v7l3.500-3.500zM4 0v7l3.500-3.500z" /></svg>
    </button>
    <ColorPanel />
    <SymbolsPanel />
    <LayersPanel />
    <GradientPanel />
    <PathfinderPanel />
  </aside>
);

export default function App() {
  return (
    <div className="flex h-screen flex-col overflow-hidden bg-[#d6d6d6]">
      <MenuBar />
      <div className="mx-1 flex min-h-0 flex-1 flex-col border-x border-t border-[#444]">
        <ControlBar />
        <div className="flex min-h-0 flex-1 border-t border-[#444]">
          <Toolbox />
          <DocumentWindow />
          <Panels />
        </div>
      </div>
    </div>
  );
}
